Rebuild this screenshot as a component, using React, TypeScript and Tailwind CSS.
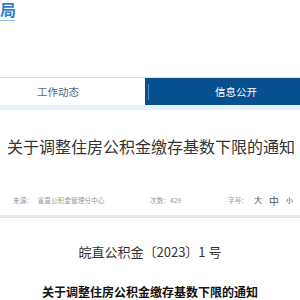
import React from "react";

export default function App() {
  const sans = { fontFamily: '"Noto Sans CJK SC", "Noto Sans", sans-serif' };
  return (
    <div className="w-[300px] h-[300px] overflow-hidden bg-white" style={sans}>
      {/* header */}
      <div className="h-[77px] relative">
        <div className="absolute left-0 top-0 flex flex-col">
          <span className="text-[16px] leading-[18px] font-bold text-[#2f7fd0] pt-[0px]">局</span>
          <div className="mt-[2px] h-[1px] w-[15px] bg-[#8bbbe8]" />
        </div>
      </div>
      {/* nav */}
      <div className="border-t border-[#dcdcdc] flex h-[28px]">
        <div className="w-[145px] flex items-center pl-[37px] text-[10.5px] text-[#4f6a88] bg-white">
          工作动态
        </div>
        <div className="flex-1 flex items-center bg-[#07508f] relative pl-[70px] text-[10.5px] text-white">
          <div className="absolute left-[3px] top-[6px] h-[16px] w-[1px] bg-[#5b86b3]" />
          信息公开
        </div>
      </div>
      <div className="h-[5px] bg-[#e8f1fb]" />
      {/* title */}
      <div className="pl-[7px] pt-[25px] text-[16px] leading-[22px] text-[#333]">
        关于调整住房公积金缴存基数下限的通知
      </div>
      {/* meta */}
      <div className="mt-[37px] flex items-center h-[12px] text-[6.7px] text-[#999]">
        <span className="pl-[13px] w-[150px]">来源：&nbsp;&nbsp;&nbsp;省直公积金管理分中心</span>
        <span className="w-[78px]">次数：429</span>
        <span>字号：</span>
        <span className="ml-[6px] text-[8px] text-[#555]">大</span>
        <span className="ml-[7px] text-[10px] text-[#555]">中</span>
        <span className="ml-[7px] text-[7px] text-[#555]">小</span>
      </div>
      <div className="mt-[9px] h-[3px] bg-gradient-to-b from-[#f0f0f0] to-[#e0e0e0]" />
      {/* body */}
      <div className="pt-[26px] text-center text-[13px] leading-[16px] text-[#333]">
        皖直公积金〔2023〕1 号
      </div>
      <div className="pt-[24px] text-center text-[12px] leading-[16px] font-bold text-[#111]">
        关于调整住房公积金缴存基数下限的通知
      </div>
    </div>
  );
}
